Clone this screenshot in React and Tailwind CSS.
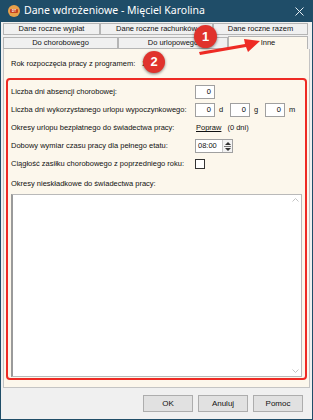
import React from 'react'

const font = { fontFamily: '"Liberation Sans", Arial, sans-serif' }

function NumBox() {
  return (
    <div className="w-[20px] h-[14px] bg-white border border-[#a0a0a0] flex items-center justify-end pr-[3px] text-[7.5px] text-black">
      0
    </div>
  )
}

function Tab({ label, w, active }) {
  return (
    <div
      className={`${w} flex items-center justify-center text-[7.5px] text-[#111] border-l border-t border-r border-[#b5b5b5] whitespace-nowrap ${
        active ? 'bg-[#fcf7ec] h-[13px] border-b-0' : 'bg-[#f0f0f0] h-[12px] border-b'
      }`}
    >
      {label}
    </div>
  )
}

export default function App() {
  return (
    <div className="w-[313px] h-[420px] bg-[#1f4d68] flex flex-col px-[1px] pb-[1px]" style={font}>
      {/* Title bar */}
      <div className="h-[22px] flex items-center pl-[7px] pr-[8px]">
        <div className="w-[12px] h-[12px] rounded-full bg-[#e9a14a] flex items-center justify-center">
          <div className="w-[8px] h-[4px] rounded-[1px] bg-[#c8421f] text-[3px] leading-[4px] text-white text-center font-bold">DT</div>
        </div>
        <span className="ml-[4px] text-[10.5px] text-white" style={{ fontFamily: '"Noto Sans", sans-serif' }}>
          Dane wdrożeniowe - Mięciel Karolina
        </span>
        <svg className="ml-auto" width="9" height="9" viewBox="0 0 9 9">
          <path d="M0.5 0.5 L8.5 8.5 M8.5 0.5 L0.5 8.5" stroke="#e6eef3" strokeWidth="1" />
        </svg>
      </div>

      {/* Body */}
      <div className="flex-1 bg-[#f0f0f0] flex flex-col relative">
        <div className="pt-[1px] px-[2px] flex flex-col">
          <div className="flex">
            <Tab label="Dane roczne wypłat" w="w-[97px]" />
            <Tab label="Dane roczne rachunków" w="w-[113px]" />
            <Tab label="Dane roczne razem" w="w-[95px]" />
          </div>
          <div className="flex items-end mt-[1px]">
            <Tab label="Do chorobowego" w="w-[115px]" />
            <Tab label="Do urlopowego" w="w-[110px]" />
            <Tab label="Inne" w="w-[80px]" active />
          </div>
        </div>

        {/* Panel */}
        <div className="mx-[2px] h-[339px] bg-[#fcf7ec] border-l border-r border-b border-[#c4c4c4] flex flex-col px-[2px] text-[7.5px] text-[#111] whitespace-nowrap">
          <div className="flex items-center h-[29px] pl-[5px]">
            <span>Rok rozpoczęcia pracy z programem:</span>
            <span className="ml-[7px]">2007</span>
          </div>
          <div className="h-[302px] border-2 border-[#ee2a24] rounded-[4px] flex flex-col px-[3px] pt-[3px]">
            <div className="flex items-center h-[18px]">
              <span className="w-[184px]">Liczba dni absencji chorobowej:</span>
              <NumBox />
            </div>
            <div className="flex items-center h-[18px]">
              <span className="w-[184px]">Liczba dni wykorzystanego urlopu wypoczynkowego:</span>
              <NumBox />
              <span className="ml-[4px] w-[11px]">d</span>
              <NumBox />
              <span className="ml-[4px] w-[11px]">g</span>
              <NumBox />
              <span className="ml-[4px]">m</span>
            </div>
            <div className="flex items-center h-[18px]">
              <span className="w-[185px]">Okresy urlopu bezpłatnego do świadectwa pracy:</span>
              <span className="underline">Popraw</span>
              <span className="ml-[6px]">(0 dni)</span>
            </div>
            <div className="flex items-center h-[18px]">
              <span className="w-[184px]">Dobowy wymiar czasu pracy dla pełnego etatu:</span>
              <div className="h-[14px] flex bg-white border border-[#a0a0a0]">
                <span className="w-[26px] flex items-center pl-[2px]">08:00</span>
                <div className="w-[10px] flex flex-col items-center justify-center bg-[#f3f3f3] border-l border-[#c8c8c8] gap-[1px]">
                  <svg width="6" height="3" viewBox="0 0 6 3"><path d="M0 3 L3 0 L6 3 Z" fill="#333" /></svg>
                  <div className="w-[7px] h-[1px] bg-[#777]" />
                  <svg width="6" height="3" viewBox="0 0 6 3"><path d="M0 0 L3 3 L6 0 Z" fill="#333" /></svg>
                </div>
              </div>
            </div>
            <div className="flex items-center h-[18px]">
              <span className="w-[184px]">Ciągłość zasiłku chorobowego z poprzedniego roku:</span>
              <div className="w-[10px] h-[10px] bg-white border border-[#333]" />
            </div>
            <div className="flex items-center h-[20px] mt-[1px]">
              <span>Okresy nieskładkowe do świadectwa pracy:</span>
            </div>
            <div className="flex-1 mb-[1px] bg-white border border-[#b9b9b9] border-l-[#9a9a9a] border-l-2 flex justify-end">
              <div className="w-[12px] flex flex-col items-center justify-between py-[3px]">
                <svg width="7" height="4" viewBox="0 0 7 4"><path d="M0.5 3.5 L3.5 0.5 L6.5 3.5" stroke="#c4c4c4" fill="none" /></svg>
                <svg width="7" height="4" viewBox="0 0 7 4"><path d="M0.5 0.5 L3.5 3.5 L6.5 0.5" stroke="#c4c4c4" fill="none" /></svg>
              </div>
            </div>
          </div>
        </div>

        {/* Footer */}
        <div className="flex-1 flex items-start justify-end gap-[5px] pt-[7px] pr-[9px]">
          <button className="w-[50px] h-[17px] bg-[#e1e1e1] border border-[#adadad] text-[8px] text-[#111]">OK</button>
          <button className="w-[50px] h-[17px] bg-[#e1e1e1] border border-[#adadad] text-[8px] text-[#111]">Anuluj</button>
          <button className="w-[50px] h-[17px] bg-[#e1e1e1] border border-[#adadad] text-[8px] text-[#111]">Pomoc</button>
        </div>

        {/* Annotation overlays */}
        <svg className="absolute left-[196px] top-[14px]" width="68" height="20" viewBox="0 0 68 20">
          <path d="M2 16 L48 8 L47 3 L63 5 L51 16 L49 11 L3 19 Z" fill="#ee2a24" />
        </svg>
        <div className="absolute left-[193px] top-[3px] w-[23px] h-[23px] rounded-full bg-[#e0322c] shadow-[0_1px_3px_rgba(0,0,0,0.5)] flex items-center justify-center text-white text-[13px] font-bold">
          1
        </div>
        <div className="absolute left-[142px] top-[29px] w-[22px] h-[22px] rounded-full bg-[#e0322c] shadow-[0_1px_3px_rgba(0,0,0,0.5)] flex items-center justify-center text-white text-[13px] font-bold">
          2
        </div>
      </div>
    </div>
  )
}
